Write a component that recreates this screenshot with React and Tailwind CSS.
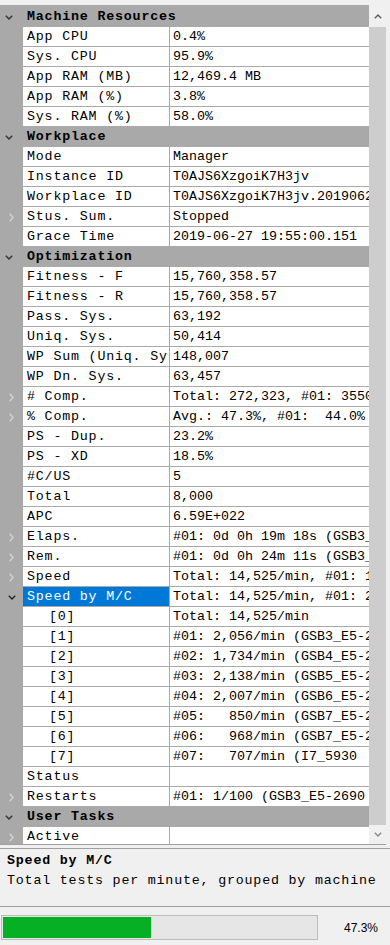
import React from 'react';

// chevrons drawn like the WinForms property grid glyphs
const Down = ({ color = '#333' }) => (
  <svg width="8" height="5" viewBox="0 0 8 5">
    <path d="M0.8 0.8 L4 4 L7.2 0.8" fill="none" stroke={color} strokeWidth="1.4" />
  </svg>
);

const Right = ({ color = '#d4d4d4' }) => (
  <svg width="5" height="9" viewBox="0 0 5 9">
    <path d="M0.8 0.8 L4 4.5 L0.8 8.2" fill="none" stroke={color} strokeWidth="1.4" />
  </svg>
);

const Up = ({ color = '#606060' }) => (
  <svg width="8" height="5" viewBox="0 0 8 5">
    <path d="M0.8 4.2 L4 1 L7.2 4.2" fill="none" stroke={color} strokeWidth="1.4" />
  </svg>
);

const sections = [
  {
    title: 'Machine Resources',
    rows: [
      { label: 'App CPU', value: '0.4%' },
      { label: 'Sys. CPU', value: '95.9%' },
      { label: 'App RAM (MB)', value: '12,469.4 MB' },
      { label: 'App RAM (%)', value: '3.8%' },
      { label: 'Sys. RAM (%)', value: '58.0%' },
    ],
  },
  {
    title: 'Workplace',
    rows: [
      { label: 'Mode', value: 'Manager' },
      { label: 'Instance ID', value: 'T0AJS6XzgoiK7H3jv' },
      { label: 'Workplace ID', value: 'T0AJS6XzgoiK7H3jv.20190627' },
      { label: 'Stus. Sum.', value: 'Stopped', exp: 'closed' },
      { label: 'Grace Time', value: '2019-06-27 19:55:00.151' },
    ],
  },
  {
    title: 'Optimization',
    rows: [
      { label: 'Fitness - F', value: '15,760,358.57' },
      { label: 'Fitness - R', value: '15,760,358.57' },
      { label: 'Pass. Sys.', value: '63,192' },
      { label: 'Uniq. Sys.', value: '50,414' },
      { label: 'WP Sum (Uniq. Sys.)', value: '148,007' },
      { label: 'WP Dn. Sys.', value: '63,457' },
      { label: '# Comp.', value: 'Total: 272,323, #01: 35509', exp: 'closed' },
      { label: '% Comp.', value: 'Avg.: 47.3%, #01:  44.0%', exp: 'closed' },
      { label: 'PS - Dup.', value: '23.2%' },
      { label: 'PS - XD', value: '18.5%' },
      { label: '#C/US', value: '5' },
      { label: 'Total', value: '8,000' },
      { label: 'APC', value: '6.59E+022' },
      { label: 'Elaps.', value: '#01: 0d 0h 19m 18s (GSB3_E5', exp: 'closed' },
      { label: 'Rem.', value: '#01: 0d 0h 24m 11s (GSB3_E5', exp: 'closed' },
      { label: 'Speed', value: 'Total: 14,525/min, #01: 1,9', exp: 'closed' },
      { label: 'Speed by M/C', value: 'Total: 14,525/min, #01: 2,0', exp: 'open', selected: true },
      { label: '[0]', value: 'Total: 14,525/min', child: true },
      { label: '[1]', value: '#01: 2,056/min (GSB3_E5-2690)', child: true },
      { label: '[2]', value: '#02: 1,734/min (GSB4_E5-2690)', child: true },
      { label: '[3]', value: '#03: 2,138/min (GSB5_E5-2690)', child: true },
      { label: '[4]', value: '#04: 2,007/min (GSB6_E5-2690)', child: true },
      { label: '[5]', value: '#05:   850/min (GSB7_E5-2690)', child: true },
      { label: '[6]', value: '#06:   968/min (GSB7_E5-2690)', child: true },
      { label: '[7]', value: '#07:   707/min (I7_5930', child: true },
      { label: 'Status', value: '' },
      { label: 'Restarts', value: '#01: 1/100 (GSB3_E5-2690', exp: 'closed' },
    ],
  },
  {
    title: 'User Tasks',
    rows: [{ label: 'Active', value: '', exp: 'closed' }],
  },
];

const Row = ({ row }) => (
  <div className="flex h-[20px]">
    <div className="w-[23px] shrink-0 bg-[#a9a9a9] flex items-center justify-center">
      {row.exp === 'closed' && <Right />}
      {row.exp === 'open' && <Down color="#222" />}
    </div>
    <div className="flex flex-1 border-b border-[#a9a9a9] bg-white">
      <div
        className={`w-[147px] shrink-0 border-r border-[#a9a9a9] flex items-center overflow-hidden whitespace-pre tracking-[0.8px] ${
          row.child ? 'pl-[26px]' : 'pl-[4px]'
        } ${row.selected ? 'bg-[#0078d7] text-white' : 'text-black'}`}
      >
        {row.label}
      </div>
      <div className="flex-1 min-w-0 flex items-center pl-[3px] overflow-hidden whitespace-pre text-black">
        {row.value}
      </div>
    </div>
  </div>
);

const Category = ({ title, first }) => (
  <div className={`flex items-center bg-[#a9a9a9] ${first ? 'h-[22px] pt-[2px]' : 'h-[20px]'}`}>
    <div className="w-[23px] shrink-0 pl-[5px] flex items-center">
      <Down color="#333" />
    </div>
    <div className="pl-[4px] font-bold tracking-[0.8px] text-black whitespace-pre">{title}</div>
  </div>
);

export default function App() {
  const pct = 47.3;
  return (
    <div className="w-[390px] h-[945px] overflow-hidden bg-[#f0f0f0] font-['Liberation_Mono','Courier_New',monospace] text-[13.333px] leading-none">
      <div className="h-[5px]" />

      {/* grid + scrollbar */}
      <div className="flex h-[839px] overflow-hidden">
        <div className="w-[369px] shrink-0 overflow-hidden">
          {sections.map((s, i) => (
            <div key={s.title}>
              <Category title={s.title} first={i === 0} />
              {s.rows.map((r) => (
                <Row key={r.label} row={r} />
              ))}
            </div>
          ))}
        </div>
        <div className="w-[17px] shrink-0 flex flex-col bg-[#f0f0f0]">
          <div className="h-[22px] flex items-center justify-center">
            <Up />
          </div>
          <div className="flex-1 bg-[#cdcdcd]" />
          <div className="h-[19px] flex items-center justify-center">
            <Down color="#8a8a8a" />
          </div>
        </div>
      </div>
      <div className="h-px w-[386px] bg-[#a0a0a0]" />

      {/* description */}
      <div className="mt-[3px] h-[59px] border-y border-[#a0a0a0] bg-[#f0f0f0] pl-[7px] pt-[2px] tracking-[0.8px] text-black">
        <div className="h-[20px] flex items-center font-bold">Speed by M/C</div>
        <div className="h-[20px] flex items-center whitespace-pre">Total tests per minute, grouped by machine</div>
      </div>

      {/* progress */}
      <div className="mt-[8px] flex items-center h-[25px]">
        <div className="ml-[1px] w-[317px] h-[25px] border border-[#bcbcbc] bg-[#e6e6e6] p-px">
          <div className="h-full bg-[#06b025]" style={{ width: `${pct}%` }} />
        </div>
        <div className="ml-auto mr-[12px] font-['Liberation_Sans',Arial,sans-serif] text-[12px] text-black">
          47.3%
        </div>
      </div>
    </div>
  );
}
